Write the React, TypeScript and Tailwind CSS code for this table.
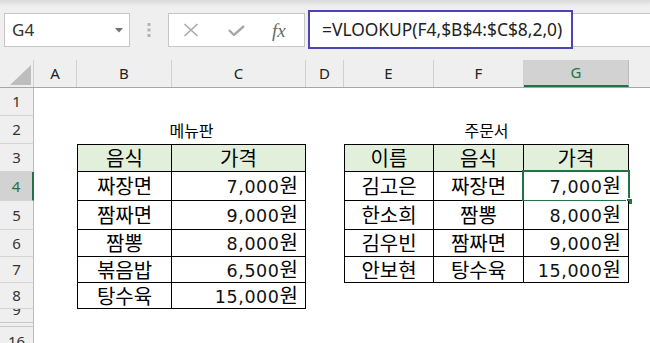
import React from "react";

const W = [34, 43, 95, 134, 38, 90, 90, 105];
const FONT = { fontFamily: "'Noto Sans CJK KR', 'Noto Sans', sans-serif" };
const NUM = { fontFamily: "'DejaVu Sans', 'Noto Sans CJK KR', sans-serif" };
const UI = { fontFamily: "'Noto Sans', 'Noto Sans CJK KR', sans-serif" };

type C = { t?: string; align?: "c" | "r"; head?: boolean; box?: { l?: boolean; t?: boolean }; sel?: boolean };

function Price({ t }: { t: string }) {
  const num = t.replace("원", "");
  return (
    <span className="whitespace-nowrap flex items-baseline">
      <span className="text-[17.5px] tracking-[0.6px] text-[#111]" style={NUM}>{num}</span>
      <span className="text-[20px]" style={FONT}>원</span>
    </span>
  );
}

function Cell({ w, c }: { w: number; c?: C }) {
  const boxed = !!c?.box;
  const cls = [
    "relative flex items-center h-full shrink-0 text-[20px] text-black leading-none",
    c?.align === "r" ? "justify-end pr-[7px]" : "justify-center",
    boxed ? "border-b border-r border-black" : "",
    c?.box?.l ? "border-l" : "",
    c?.box?.t ? "border-t" : "",
    c?.head ? "bg-[#e2efda]" : "bg-white",
  ].join(" ");
  return (
    <div className={cls} style={{ width: w, ...FONT }}>
      {c?.t && (c.align === "r" ? <Price t={c.t} /> : <span className="whitespace-nowrap">{c.t}</span>)}
      {c?.sel && (
        <>
          <div className="absolute left-[-2px] top-[-2px] right-[-2px] bottom-[-2px] border-2 border-[#217346] pointer-events-none" />
          <div className="absolute right-[-5px] bottom-[-5px] w-[7px] h-[7px] bg-[#217346] border border-white" />
        </>
      )}
    </div>
  );
}

function RowHead({ label, sel, h }: { label: string; sel?: boolean; h: number }) {
  return (
    <div
      className={
        "shrink-0 w-[34px] flex justify-center items-center border-b border-[#d4d4d4] text-[15px] " +
        (sel ? "bg-[#d2d2d2] text-[#217346] border-r-2 border-r-[#217346]" : "bg-[#efefef] text-[#333] border-r border-r-[#bcbcbc]")
      }
      style={{ height: h, ...UI }}
    >
      {label}
    </div>
  );
}

const menu: [string, string][] = [
  ["짜장면", "7,000원"],
  ["짬짜면", "9,000원"],
  ["짬뽕", "8,000원"],
  ["볶음밥", "6,500원"],
  ["탕수육", "15,000원"],
];
const orders: [string, string, string][] = [
  ["김고은", "짜장면", "7,000원"],
  ["한소희", "짬뽕", "8,000원"],
  ["김우빈", "짬짜면", "9,000원"],
  ["안보현", "탕수육", "15,000원"],
];

function cellsFor(r: number): (C | undefined)[] {
  const out: (C | undefined)[] = new Array(7).fill(undefined);
  if (r === 3) {
    out[1] = { t: "음식", head: true, box: { l: true, t: true } };
    out[2] = { t: "가격", head: true, box: { t: true } };
    out[4] = { t: "이름", head: true, box: { l: true, t: true } };
    out[5] = { t: "음식", head: true, box: { t: true } };
    out[6] = { t: "가격", head: true, box: { t: true } };
  }
  if (r >= 4 && r <= 8) {
    const m = menu[r - 4];
    out[1] = { t: m[0], box: { l: true } };
    out[2] = { t: m[1], align: "r", box: {} };
  }
  if (r >= 4 && r <= 7) {
    const o = orders[r - 4];
    out[4] = { t: o[0], box: { l: true } };
    out[5] = { t: o[1], box: {} };
    out[6] = { t: o[2], align: "r", box: {}, sel: r === 4 };
  }
  return out;
}

function BodyRow({ r, h }: { r: number; h: number }) {
  const cells = cellsFor(r);
  return (
    <div className="flex" style={{ height: h }}>
      <RowHead label={String(r)} sel={r === 4} h={h} />
      {r === 2 ? (
        <>
          <div className="shrink-0 bg-white" style={{ width: W[1] }} />
          <div className="shrink-0 flex items-center justify-center bg-white text-[16px] text-black" style={{ width: W[2] + W[3], ...FONT }}>
            메뉴판
          </div>
          <div className="shrink-0 bg-white" style={{ width: W[4] }} />
          <div className="shrink-0 flex items-center justify-center bg-white text-[16px] text-black" style={{ width: W[5] + W[6] + W[7], ...FONT }}>
            주문서
          </div>
        </>
      ) : (
        cells.map((c, i) => <Cell key={i} w={W[i + 1]} c={c} />)
      )}
      <div className="flex-1 bg-white" />
    </div>
  );
}

export default function App() {
  const heights: Record<number, number> = { 1: 28, 2: 28, 3: 28, 4: 29, 5: 29, 6: 27, 7: 26, 8: 26 };
  return (
    <div className="w-[650px] h-[343px] overflow-hidden bg-[#efefef] relative" style={UI}>
      {/* toolbar */}
      <div className="h-[60px] bg-[linear-gradient(#d9d9d9,#efefef_6px)] flex items-start pt-[10px]">
        <div className="ml-[4px] mt-[3px] w-[126px] h-[34px] bg-white border border-[#c6c6c6] flex items-center pl-[7px] pr-[6px]">
          <span className="text-[17px] text-[#333] flex-1">G4</span>
          <svg width="8" height="5" viewBox="0 0 8 5"><path d="M0 0 L8 0 L4 4.5 Z" fill="#707070" /></svg>
        </div>
        <div className="w-[38px] h-[40px] flex items-center justify-center">
          <svg width="4" height="14" viewBox="0 0 4 14">
            <rect x="0.5" y="0" width="3" height="3" fill="#b3b3b3" />
            <rect x="0.5" y="5.5" width="3" height="3" fill="#b3b3b3" />
            <rect x="0.5" y="11" width="3" height="3" fill="#b3b3b3" />
          </svg>
        </div>
        <div className="mt-[3px] w-[137px] h-[34px] bg-white border border-[#c6c6c6] flex items-center">
          <svg className="ml-[14px]" width="16" height="14" viewBox="0 0 16 14">
            <path d="M1.5 1 L14.5 13 M14.5 1 L1.5 13" stroke="#a8a8a8" strokeWidth="1.6" fill="none" />
          </svg>
          <svg className="ml-[29px]" width="17" height="11" viewBox="0 0 17 11">
            <path d="M1 5 L6 10 L16 1" stroke="#a8a8a8" strokeWidth="2.4" fill="none" />
          </svg>
          <span className="ml-[27px] text-[19px] italic text-[#6a6a6a] leading-none" style={{ fontFamily: "'Liberation Serif', serif" }}>
            fx
          </span>
        </div>
        <div className="ml-[3px] w-[265px] h-[39px] bg-white border-2 border-[#4e43b4] flex items-center pl-[12px]">
          <span className="text-[17.4px] text-[#222] whitespace-nowrap">=VLOOKUP(F4,$B$4:$C$8,2,0)</span>
        </div>
        <div className="mt-[3px] flex-1 h-[34px] bg-white border-y border-[#c6c6c6]" />
      </div>

      {/* column headers */}
      <div className="flex h-[28px] bg-[#efefef] border-b border-[#a6a6a6]">
        <div className="shrink-0 w-[34px] h-full relative border-r border-[#d0d0d0]">
          <svg className="absolute left-[10px] top-[5px]" width="21" height="20" viewBox="0 0 21 20">
            <path d="M21 0 L21 20 L0 20 Z" fill="#bdbdbd" />
          </svg>
        </div>
        {["A", "B", "C", "D", "E", "F", "G"].map((l, i) => (
          <div
            key={l}
            className={
              "shrink-0 h-full flex items-center justify-center text-[15px] " +
              (l === "G"
                ? "bg-[#d2d2d2] text-[#217346] border-b-2 border-b-[#217346] border-r border-r-[#bcbcbc]"
                : "text-[#222] border-r border-[#d0d0d0]")
            }
            style={{ width: W[i + 1] }}
          >
            {l}
          </div>
        ))}
        <div className="flex-1" />
      </div>

      {/* body */}
      {[1, 2, 3, 4, 5, 6, 7, 8].map((r) => (
        <BodyRow key={r} r={r} h={heights[r]} />
      ))}
      <div className="flex h-[14px]">
        <div className="shrink-0 w-[34px] h-full overflow-hidden bg-[#efefef] border-r border-[#bcbcbc] border-b border-b-[#c8c8c8] flex justify-center items-start">
          <span className="text-[15px] text-[#333] leading-[15px] -mt-[7px]">9</span>
        </div>
        <div className="flex-1 bg-white" />
      </div>
      <div className="flex h-[4px]">
        <div className="shrink-0 w-[34px] h-full bg-[#efefef] border-r border-[#bcbcbc] border-b border-b-[#c8c8c8]" />
        <div className="flex-1 bg-white" />
      </div>
      <div className="flex h-[28px]">
        <div className="shrink-0 w-[34px] h-full bg-[#efefef] border-r border-[#bcbcbc] flex justify-center items-center text-[15px] text-[#333]">
          16
        </div>
        <div className="flex-1 bg-white" />
      </div>
    </div>
  );
}
